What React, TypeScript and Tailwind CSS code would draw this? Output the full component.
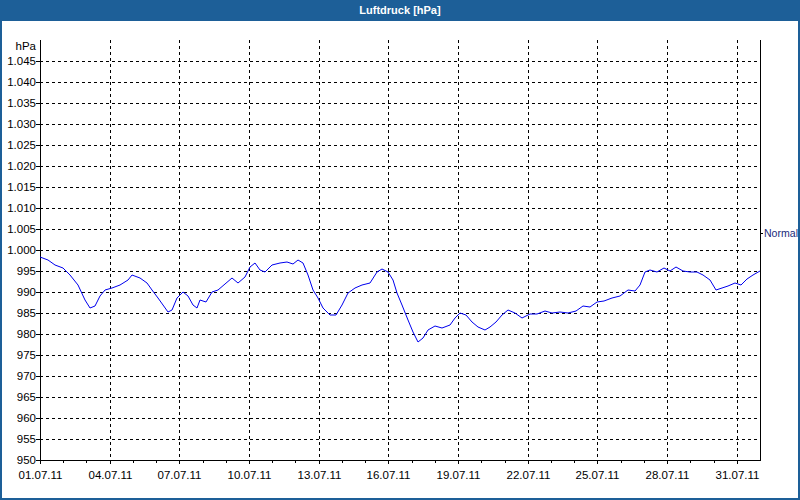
import React from 'react';

const pts: [number, number][] = [
  [40,257],[48,260],[55,265],[63,268],[70,275],[78,285],[85,300],[90,308],[95,306],[100,296],[105,290],[112,288],[120,285],[128,280],[132,275],[140,278],[147,283],[152,290],[158,298],[163,305],[168,312],[172,310],[177,298],[183,292],[188,296],[193,305],[197,308],[200,300],[206,302],[212,292],[218,290],[225,284],[232,278],[238,283],[245,277],[250,267],[255,263],[260,270],[265,272],[272,265],[280,263],[287,262],[293,264],[298,260],[303,263],[308,275],[313,290],[318,298],[323,308],[330,315],[336,315],[342,305],[348,293],[355,288],[362,285],[370,283],[377,272],[382,269],[388,272],[393,280],[397,293],[402,305],[408,320],[413,332],[418,342],[423,338],[428,330],[435,326],[442,328],[450,325],[455,318],[460,313],[466,315],[472,322],[478,327],[485,330],[490,327],[496,322],[502,315],[508,310],[515,313],[522,318],[530,314],[537,314],[545,311],[552,313],[560,312],[568,313],[576,311],[583,306],[590,307],[597,302],[604,301],[612,298],[620,296],[628,290],[635,291],[640,285],[645,272],[650,270],[657,272],[664,268],[670,271],[676,267],[683,271],[690,272],[697,272],[703,275],[710,280],[716,290],[722,288],[728,286],[735,283],[741,285],[747,279],[753,275],[760,271],
];

const yVals = Array.from({ length: 20 }, (_, i) => 1045 - i * 5);
const dayW = 720 / 31;

const fmt = (v: number) => (v >= 1000 ? '1.' + String(v - 1000).padStart(3, '0') : String(v));

export default function App() {
  return (
    <div className="w-[800px] h-[500px] flex flex-col bg-[#1d5f98]" style={{ fontFamily: 'Tahoma, "Liberation Sans", sans-serif' }}>
      <div className="h-[21px] flex items-center justify-center text-white text-[11px] font-bold">Luftdruck [hPa]</div>
      <div className="flex-1 mx-[2px] mb-[2px] bg-white">
        <svg width="796" height="477" className="block" fontSize="11.5" fontFamily="Tahoma, 'Liberation Sans', sans-serif">
          <g transform="translate(-2,-21)">
            {yVals.map((v, i) => {
              const y = 61 + i * 21;
              return (
                <g key={v}>
                  {v !== 950 && <line x1={40} x2={760} y1={y + 0.5} y2={y + 0.5} stroke="#000" strokeDasharray="3 3" />}
                  <line x1={36} x2={40} y1={y + 0.5} y2={y + 0.5} stroke="#000" />
                  <text x={36} y={y + 4} textAnchor="end" fill="#000">{fmt(v)}</text>
                </g>
              );
            })}
            <text x={36} y={50} textAnchor="end" fill="#000">hPa</text>
            {Array.from({ length: 31 }, (_, d) => {
              const x = Math.round(40 + d * dayW) + 0.5;
              const major = d % 3 === 0;
              return (
                <g key={d}>
                  {major && d > 0 && <line x1={x} x2={x} y1={40} y2={460} stroke="#000" strokeDasharray="3 3" />}
                  <line x1={x} x2={x} y1={460} y2={major ? 464 : 463} stroke="#000" />
                  {major && (
                    <text x={x} y={479} textAnchor="middle" fill="#000">
                      {String(d + 1).padStart(2, '0')}.07.11
                    </text>
                  )}
                </g>
              );
            })}
            <line x1={40.5} x2={40.5} y1={40} y2={461} stroke="#000" />
            <line x1={40} x2={760} y1={460.5} y2={460.5} stroke="#000" />
            <line x1={760.5} x2={760.5} y1={40} y2={461} stroke="#000" />
            <line x1={760} x2={763} y1={233.5} y2={233.5} stroke="#000" />
            <text x={764} y={237} fill="#1a2a7a" fontSize="11" textLength="34" lengthAdjust="spacingAndGlyphs">Normal</text>
            <polyline points={pts.map((p) => p.join(',')).join(' ')} fill="none" stroke="#0000ee" strokeWidth="1" />
          </g>
        </svg>
      </div>
    </div>
  );
}
